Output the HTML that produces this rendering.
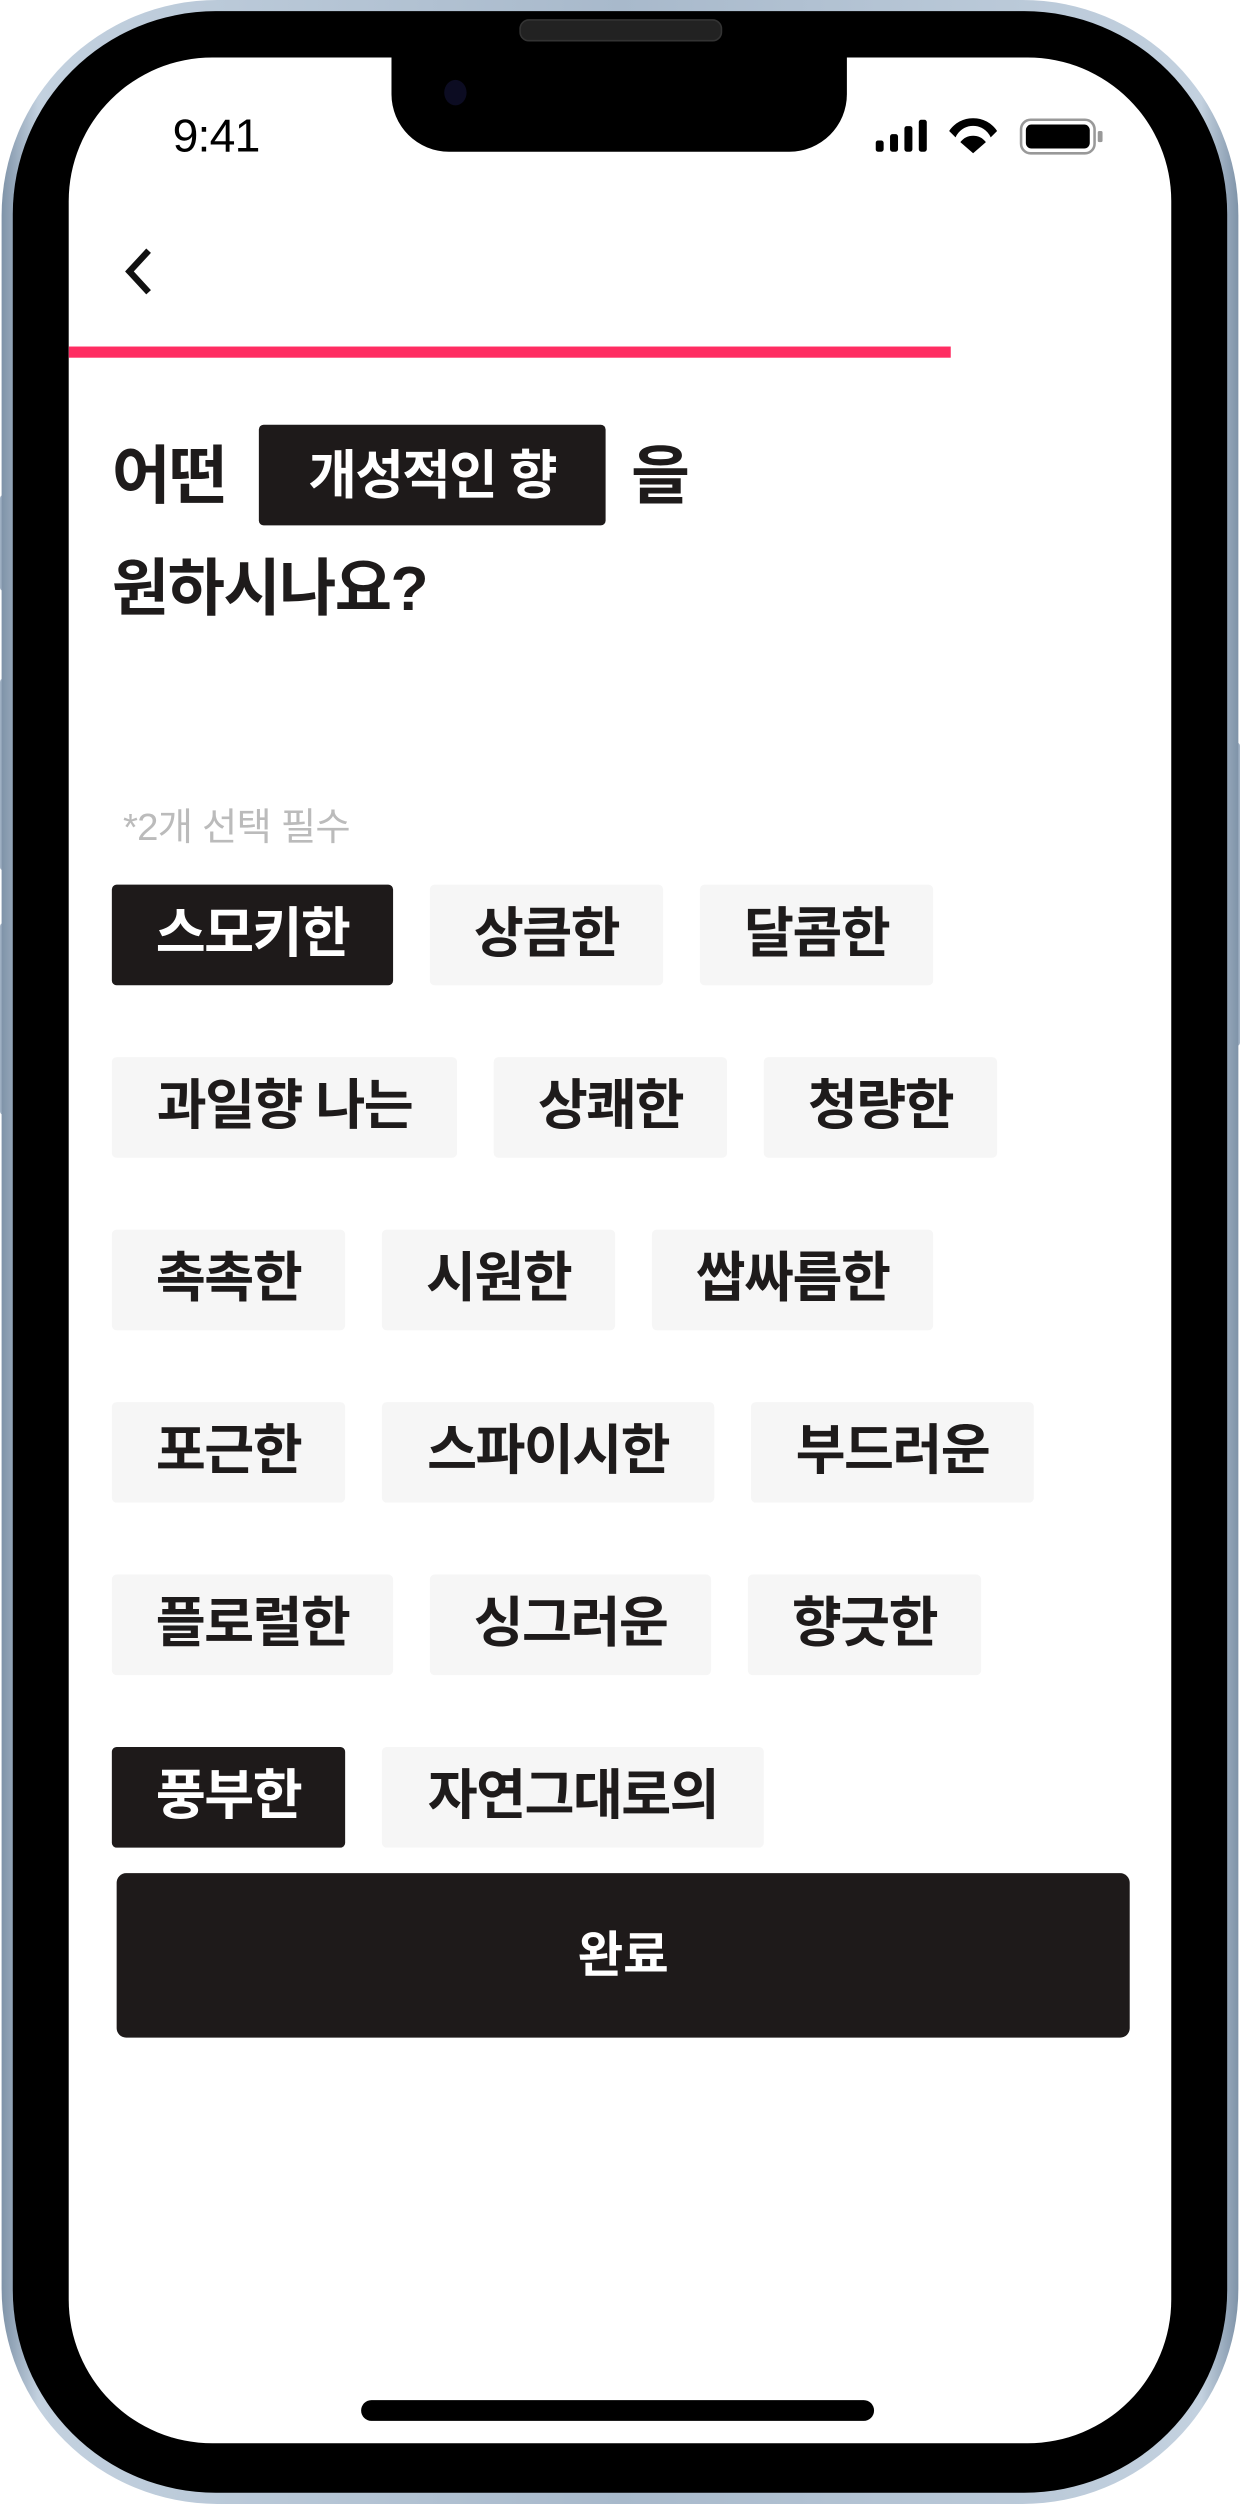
<!DOCTYPE html>
<html><head><meta charset="utf-8"><style>
html,body{margin:0;padding:0;background:#fff;width:1240px;height:2504px;overflow:hidden}
#w{position:absolute;left:0;top:0;width:776px;height:1568px;transform:scale(1.5979,1.5969);transform-origin:0 0;font-family:"Liberation Sans","Noto Sans CJK KR",sans-serif}
.frame{position:absolute;left:1px;top:0;width:774px;height:1568px;border-radius:135px;background:linear-gradient(90deg,#7f93a8,#c3d1df 3%,#a8b9cb 50%,#c3d1df 97%,#7f93a8)}
.bez{position:absolute;left:8px;top:7px;width:760px;height:1554px;border-radius:127px;background:#000}
.screen{position:absolute;left:43px;top:36px;width:690px;height:1494px;border-radius:90px;background:#fff;overflow:hidden}
.notch{position:absolute;left:202px;top:0;width:285px;height:59px;background:#000;border-radius:0 0 36px 36px}
.btn{position:absolute;background:#9fb0c3;border-radius:2px}
.abs{position:absolute}
.chip{position:absolute;height:63px;background:#f6f6f6;border-radius:3px;font-size:34px;font-weight:bold;color:#1e1b1b;line-height:63px;text-align:center;letter-spacing:-1px}
.on{background:#1e1a1a;color:#fff}
</style></head><body><div id="w">
<div class="btn" style="left:0;top:310px;width:6px;height:60px"></div>
<div class="btn" style="left:0;top:425px;width:6px;height:120px"></div>
<div class="btn" style="left:0;top:578px;width:6px;height:120px"></div>
<div class="btn" style="left:770px;top:465px;width:6px;height:190px"></div>
<div class="frame"></div>
<div class="bez"></div>
<div class="abs" style="left:325px;top:12px;width:125px;height:12px;border-radius:6px;background:#222;border:1px solid #333"></div>
<div class="screen">
<div class="notch"></div>
<div class="abs" style="left:235px;top:14px;width:14px;height:16px;border-radius:50%;background:#0c0c22"></div>
<div class="abs" style="left:65px;top:34px;font-size:29px;color:#000;letter-spacing:-0.5px">9:41</div>
<svg class="abs" style="left:505px;top:38px" width="145" height="24" viewBox="0 0 145 24">
<rect x="0" y="14" width="5" height="7" rx="1.5"/><rect x="9" y="10" width="5" height="11" rx="1.5"/><rect x="18" y="5" width="5" height="16" rx="1.5"/><rect x="27" y="1" width="5" height="20" rx="1.5"/>
<path d="M46 8 A18 18 0 0 1 76 8 L72 12 A12 12 0 0 0 50 12Z M53 15 A10 10 0 0 1 69 15 L61 22Z"/>
<rect x="91" y="1" width="46" height="21" rx="6" fill="none" stroke="#999" stroke-width="1.6"/><rect x="94" y="4" width="40" height="15" rx="3.5"/><rect x="139" y="8" width="3" height="7" rx="1" fill="#999"/>
</svg>
<svg class="abs" style="left:33px;top:118px" width="24" height="32" viewBox="0 0 24 32"><path d="M17 3 L5 16 L17 29" fill="none" stroke="#111" stroke-width="4"/></svg>
<div class="abs" style="left:0;top:181px;width:552px;height:7px;background:#ff2d62"></div>
<div class="abs" style="left:27px;top:238px;font-size:40px;font-weight:bold;color:#1e1b1b;line-height:50px;letter-spacing:-1px">어떤</div>
<div class="abs" style="left:119px;top:230px;width:217px;height:63px;background:#1e1a1a;border-radius:3px;color:#fff;font-size:33px;font-weight:bold;line-height:63px;text-align:center;letter-spacing:-1px">개성적인 향</div>
<div class="abs" style="left:352px;top:238px;font-size:40px;font-weight:bold;color:#1e1b1b;line-height:50px">을</div>
<div class="abs" style="left:27px;top:309px;font-size:39px;font-weight:bold;color:#1e1b1b;line-height:50px;letter-spacing:-1px">원하시나요?</div>
<div class="abs" style="left:34px;top:462px;font-size:24px;color:#bbb;letter-spacing:-0.5px">*2개 선택 필수</div>
</div>
<div class="chip on" style="left:70px;top:554px;width:176px">스모키한</div>
<div class="chip" style="left:269px;top:554px;width:146px">상큼한</div>
<div class="chip" style="left:438px;top:554px;width:146px">달콤한</div>
<div class="chip" style="left:70px;top:662px;width:216px">과일향 나는</div>
<div class="chip" style="left:309px;top:662px;width:146px">상쾌한</div>
<div class="chip" style="left:478px;top:662px;width:146px">청량한</div>
<div class="chip" style="left:70px;top:770px;width:146px">촉촉한</div>
<div class="chip" style="left:239px;top:770px;width:146px">시원한</div>
<div class="chip" style="left:408px;top:770px;width:176px">쌉싸름한</div>
<div class="chip" style="left:70px;top:878px;width:146px">포근한</div>
<div class="chip" style="left:239px;top:878px;width:208px">스파이시한</div>
<div class="chip" style="left:470px;top:878px;width:177px">부드러운</div>
<div class="chip" style="left:70px;top:986px;width:176px">플로럴한</div>
<div class="chip" style="left:269px;top:986px;width:176px">싱그러운</div>
<div class="chip" style="left:468px;top:986px;width:146px">향긋한</div>
<div class="chip on" style="left:70px;top:1094px;width:146px">풍부한</div>
<div class="chip" style="left:239px;top:1094px;width:239px">자연그대로의</div>
<div class="abs" style="left:73px;top:1173px;width:634px;height:103px;background:#1e1a1a;border-radius:6px;color:#fff;font-size:31px;font-weight:bold;line-height:103px;text-align:center">완료</div>
<div class="abs" style="left:226px;top:1503px;width:321px;height:13px;background:#000;border-radius:7px"></div>
</div></body></html>
